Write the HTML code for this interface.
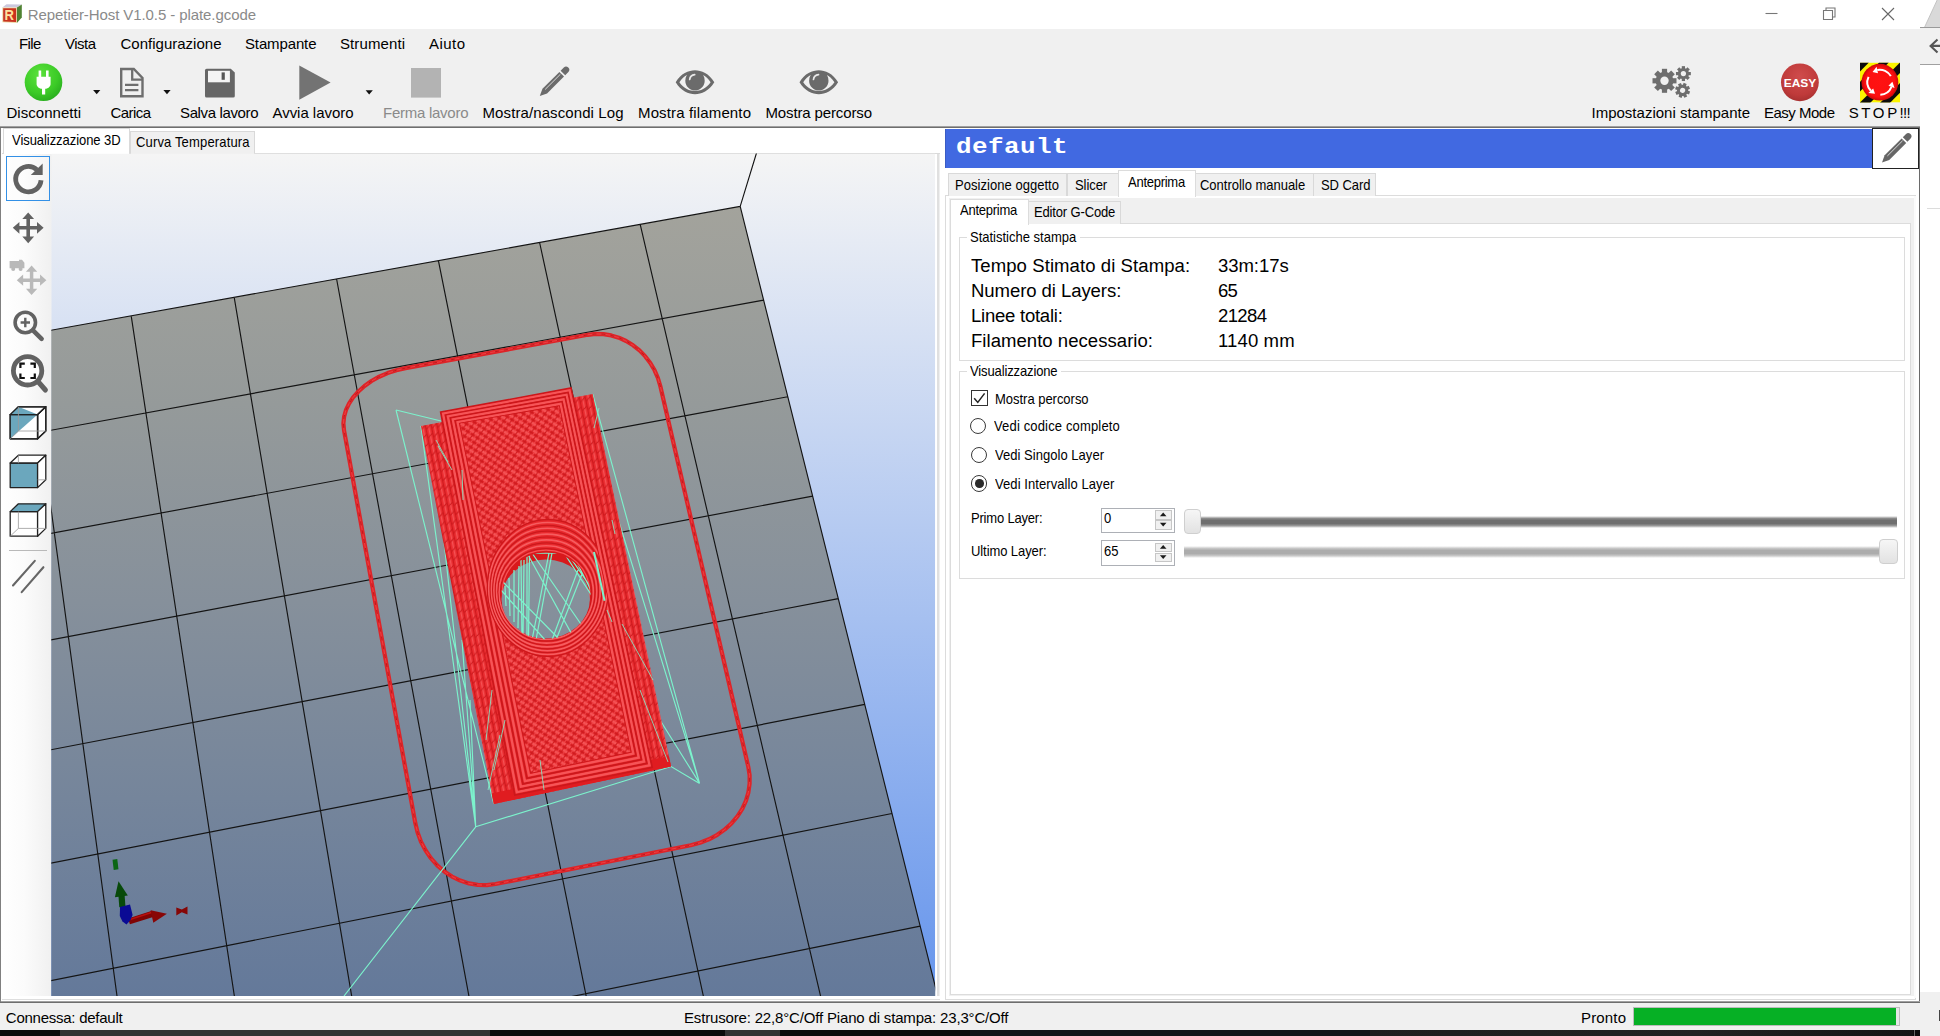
<!DOCTYPE html>
<html>
<head>
<meta charset="utf-8">
<title>Repetier-Host V1.0.5 - plate.gcode</title>
<style>
html,body{margin:0;padding:0;background:#fff;overflow:hidden}
body{width:1940px;height:1036px;position:relative;font-family:"Liberation Sans",sans-serif}
#root{position:absolute;left:0;top:0;width:1940px;height:1036px;overflow:hidden;background:#fff}
#root div{position:absolute;box-sizing:border-box}
.t{position:absolute;white-space:pre;display:block}
svg{position:absolute;overflow:visible}
</style>
</head>
<body>
<div id="root">

<!-- neighbouring window at far right -->
<div style="left:1920px;top:0;width:20px;height:1036px;background:#fff"></div>
<div style="left:1920px;top:27px;width:20px;height:37px;background:#f1f1f1"></div>
<div style="left:1920px;top:63.8px;width:20px;height:1px;background:#a0a0a0"></div>
<div style="left:1927px;top:208px;width:13px;height:1px;background:#dcdcdc"></div>
<div style="left:1920px;top:992.4px;width:20px;height:44px;background:#f0f0f0"></div>
<svg width="20" height="30" style="left:1920px;top:0"><polygon points="4.7,27 17.2,0 20,0 20,27" fill="#d9d9d9"/><path d="M4.7,27 L17.2,0" stroke="#c4c4c4" stroke-width="1" fill="none"/></svg>
<div style="left:1920px;top:27px;width:20px;height:1px;background:#9a9a9a"></div>
<svg width="20" height="20" style="left:1920px;top:36px"><path d="M20,9.9 H11 M17.5,3.5 L10.6,9.9 L17.5,16.6" stroke="#555" stroke-width="2.1" fill="none"/></svg>
<div style="left:1938.5px;top:1010px;width:1.5px;height:10.5px;background:#444"></div>
<!-- main window -->
<div style="left:0;top:0;width:1920px;height:29px;background:#fff"></div>
<div style="left:0;top:29px;width:1920px;height:97px;background:#f0f0f0"></div>
<div style="left:0;top:126px;width:1920px;height:1px;background:#a0a0a0"></div>
<div style="left:0;top:127px;width:1920px;height:1px;background:#6e6e6e"></div>
<div style="left:0;top:128px;width:1920px;height:874px;background:#fff"></div>
<div style="left:1919px;top:128px;width:1px;height:874px;background:#6a6a6a"></div>
<!-- status bar -->
<div style="left:0;top:1001px;width:1920px;height:1px;background:#a0a0a0"></div>
<div style="left:0;top:1002px;width:1920px;height:1px;background:#6e6e6e"></div>
<div style="left:0;top:1003px;width:1920px;height:27px;background:#f0f0f0"></div>
<div style="left:0;top:1029.5px;width:1920px;height:6.5px;background:#0c0c0c"></div>
<div style="left:60px;top:1029.5px;width:430px;height:6.5px;background:#333"></div>
<div style="left:725px;top:1029.5px;width:55px;height:6.5px;background:#333"></div>
<div style="left:970px;top:1029.5px;width:400px;height:6.5px;background:#10161a"></div>
<div style="left:1370px;top:1029.5px;width:543px;height:6.5px;background:linear-gradient(90deg,#1e1e1e,#222 60%,#141414)"></div>
<div style="left:1913.5px;top:1029.5px;width:1.2px;height:6.5px;background:#666"></div>
<div style="left:1633px;top:1006.5px;width:267px;height:19.5px;background:#e6e6e6;border:1px solid #bcbcbc"></div>
<div style="left:1634px;top:1007.5px;width:262.2px;height:17.5px;background:#06b025"></div>
<!-- left tab control -->
<div style="left:0;top:128px;width:1.4px;height:874px;background:#808080"></div>
<div style="left:2px;top:153px;width:938px;height:848px;background:#fff;border-top:1px solid #dadada"></div>
<div style="left:130px;top:130.5px;width:125px;height:23px;background:#f0f0f0;border:1px solid #d9d9d9;border-bottom:none"></div>
<div style="left:3px;top:128px;width:127px;height:26px;background:#fff;border:1px solid #dadada;border-bottom:none"></div>
<div style="left:2px;top:154px;width:49.5px;height:847px;background:linear-gradient(90deg,#ffffff 0%,#fbfbfb 45%,#f0f0f0 100%)"></div>
<div style="left:936.5px;top:154px;width:2px;height:845px;background:#e0e0e0"></div><div style="left:938.5px;top:154px;width:1px;height:845px;background:#efefef"></div>
<div style="left:2px;top:996px;width:938px;height:5px;background:#fff"></div><div style="left:2px;top:999px;width:937.5px;height:1px;background:#dedede"></div>
<!-- selected tool button -->
<div style="left:6px;top:156.3px;width:44px;height:45.2px;background:rgba(255,255,255,0.25);border:1px solid #3390e6"></div>
<div style="left:9px;top:549.5px;width:38px;height:1px;background:#b9b9b9"></div>
<!-- right panel header -->
<div style="left:945px;top:128.8px;width:929px;height:38.8px;background:#4169e1;border-left:1px solid #3a5cc4"></div>
<div style="left:1872.4px;top:127.6px;width:46.8px;height:41.2px;background:#fff;border:1.8px solid #222"></div>
<!-- outer tab control -->
<div style="left:944.8px;top:195.3px;width:971.7px;height:804.5px;background:#fff;border:1px solid #dcdcdc"></div>
<div style="left:949px;top:198px;width:965px;height:798px;background:#f0f0f0"></div><div style="left:1914px;top:196.3px;width:2px;height:802px;background:#fbfbfb"></div>

<div style="left:948px;top:172.8px;width:119px;height:23.2px;background:#f0f0f0;border:1px solid #d9d9d9;border-bottom:none"></div>
<div style="left:1066.5px;top:172.8px;width:52px;height:23.2px;background:#f0f0f0;border:1px solid #d9d9d9;border-bottom:none"></div>
<div style="left:1195px;top:172.8px;width:119px;height:23.2px;background:#f0f0f0;border:1px solid #d9d9d9;border-bottom:none"></div>
<div style="left:1313px;top:172.8px;width:63px;height:23.2px;background:#f0f0f0;border:1px solid #d9d9d9;border-bottom:none"></div>
<div style="left:1118px;top:170.2px;width:78px;height:26.8px;background:#fff;border:1px solid #dcdcdc;border-bottom:none"></div>
<!-- inner tab control -->
<div style="left:950px;top:223px;width:961px;height:771.6px;background:#fff;border:1px solid #dcdcdc"></div>
<div style="left:1028px;top:201px;width:93px;height:22.5px;background:#f0f0f0;border:1px solid #d9d9d9;border-bottom:none"></div>
<div style="left:950px;top:198.5px;width:78.5px;height:26px;background:#fff;border:1px solid #dcdcdc;border-bottom:none"></div>
<!-- group boxes -->
<div style="left:959px;top:237px;width:946px;height:123.5px;border:1px solid #dcdcdc"></div>
<div style="left:967px;top:230px;width:113px;height:14px;background:#fff"></div>
<div style="left:959px;top:371px;width:946px;height:207.5px;border:1px solid #dcdcdc"></div>
<div style="left:967px;top:364px;width:94px;height:14px;background:#fff"></div>
<!-- checkbox + radios -->
<div style="left:971px;top:390px;width:16.5px;height:16.4px;background:#fff;border:1.4px solid #333"></div>
<div style="left:969.8px;top:418px;width:16.2px;height:16.2px;border-radius:50%;background:#fff;border:1.5px solid #3a3a3a"></div>
<div style="left:971.2px;top:446.7px;width:16.2px;height:16.2px;border-radius:50%;background:#fff;border:1.5px solid #3a3a3a"></div>
<div style="left:971.2px;top:475.4px;width:16.2px;height:16.2px;border-radius:50%;background:#fff;border:1.5px solid #3a3a3a"></div>
<div style="left:975px;top:479.2px;width:8.6px;height:8.6px;border-radius:50%;background:#2a2a2a"></div>
<!-- spinners -->
<div style="left:1101px;top:507.5px;width:74px;height:25.5px;background:#fff;border:1px solid #adb0b6"></div>
<div style="left:1155px;top:510px;width:17px;height:9.6px;background:#f0f0f0;border:1px solid #c6c6c6"></div><div style="left:1155px;top:520px;width:17px;height:9.8px;background:#f0f0f0;border:1px solid #c6c6c6"></div>

<div style="left:1101px;top:540px;width:74px;height:25.5px;background:#fff;border:1px solid #adb0b6"></div>
<div style="left:1155px;top:542.5px;width:17px;height:9.6px;background:#f0f0f0;border:1px solid #c6c6c6"></div><div style="left:1155px;top:552.5px;width:17px;height:9.8px;background:#f0f0f0;border:1px solid #c6c6c6"></div>

<!-- sliders -->
<div style="left:1184px;top:516px;width:713px;height:11.5px;background:linear-gradient(180deg,#ffffff 0%,#8c8c8c 20%,#6f6f6f 36%,#6f6f6f 64%,#9c9c9c 82%,#ffffff 100%)"></div>
<div style="left:1183.5px;top:509px;width:17.5px;height:24.5px;border-radius:4px;background:linear-gradient(180deg,#f6f6f6,#e2e2e2);border:1px solid #cfcfcf"></div>
<div style="left:1184px;top:545.5px;width:713px;height:12px;background:linear-gradient(180deg,#ffffff 0%,#c6c6c6 20%,#acacac 36%,#acacac 64%,#cacaca 82%,#ffffff 100%)"></div>
<div style="left:1879px;top:539px;width:18.5px;height:25px;border-radius:4px;background:linear-gradient(180deg,#f6f6f6,#e2e2e2);border:1px solid #cfcfcf"></div>

<svg style="position:absolute;left:0;top:0" width="1940" height="1036" viewBox="0 0 1940 1036">
<defs>
<linearGradient id="bg" x1="0" y1="153" x2="0" y2="996" gradientUnits="userSpaceOnUse">
<stop offset="0" stop-color="#f5f5f5"/><stop offset="1" stop-color="#6695ec"/></linearGradient>
<linearGradient id="bed" x1="0" y1="206" x2="0" y2="996" gradientUnits="userSpaceOnUse">
<stop offset="0" stop-color="#a3a39c"/><stop offset="0.25" stop-color="#959a9a"/><stop offset="0.5" stop-color="#86909b"/><stop offset="0.75" stop-color="#75859b"/><stop offset="1" stop-color="#64799a"/></linearGradient>
<clipPath id="vw"><rect x="51.3" y="153.6" width="883.9000000000001" height="842.5"/></clipPath>
<pattern id="hatch" width="8" height="8" patternUnits="userSpaceOnUse" patternTransform="matrix(-1.02,0.18,0.18,0.97,460,423)">
<rect width="8" height="8" fill="#e8292d"/>
<path d="M-1,1 L1,-1 M-1,9 L9,-1 M7,9 L9,7" stroke="#f65659" stroke-width="2.3"/>
<path d="M-1,5 L5,-1 M3,9 L9,3" stroke="#d11a1e" stroke-width="1.5"/>
<path d="M-1,-1 L9,9 M-1,7 L1,9 M7,-1 L9,1" stroke="#cf1a1e" stroke-width="1.0"/>
<path d="M3,-1 L9,5 M-1,3 L5,9" stroke="#f24a4d" stroke-width="0.9"/>
</pattern>
<pattern id="rope" width="5.6" height="9" patternUnits="userSpaceOnUse" patternTransform="matrix(-1.02,0.18,0.2,0.97,420,426)">
<rect width="5.6" height="9" fill="#e8292d"/>
<path d="M0.5,-1 L0.5,10" stroke="#cf1a1e" stroke-width="1.1"/>
<path d="M3.2,-1 L3.2,10" stroke="#f55255" stroke-width="1.5"/>
<path d="M0.5,0 L5.6,4.5 M0.5,9 L5.6,13.5 M-5.1,4.5 L0.5,9" stroke="#cc181c" stroke-width="1.0" fill="none"/>
</pattern>
</defs>
<g clip-path="url(#vw)">
<rect x="51.3" y="153.6" width="883.9000000000001" height="842.5" fill="url(#bg)"/>
<polygon points="740.2,206.4 -181.7,372.1 -78.0,1384.3 979.3,1162.6" fill="url(#bed)"/>
<path d="M740.2,206.4 L979.3,1162.6 M640.2,224.4 L865.1,1186.6 M539.6,242.5 L750.0,1210.7 M438.4,260.7 L634.2,1235.0 M336.6,279.0 L517.5,1259.4 M234.2,297.4 L400.1,1284.0 M131.2,315.9 L281.8,1308.8 M27.5,334.5 L162.7,1333.8 M-76.7,353.3 L42.8,1358.9 M-181.7,372.1 L-78.0,1384.3 M740.2,206.4 L-181.7,372.1 M763.6,300.1 L-171.5,470.9 M787.7,396.7 L-161.1,572.8 M812.6,496.1 L-150.3,677.9 M838.3,598.6 L-139.2,786.3 M864.7,704.4 L-127.8,898.1 M892.0,813.5 L-115.9,1013.7 M920.2,926.1 L-103.7,1133.1 M949.3,1042.4 L-91.1,1256.6 M979.3,1162.6 L-78.0,1384.3 M740.2,206.4 L756.5,153" stroke="#141414" stroke-width="1.15" fill="none"/>
<polygon points="405.5,368.1 396.4,370.2 387.6,373.1 379.2,376.7 371.5,381.0 364.5,386.0 358.4,391.5 353.1,397.4 349.0,403.7 345.9,410.2 344.1,416.8 343.4,423.5 344.0,430.1 415.3,823.1 417.6,832.5 421.0,841.7 425.5,850.3 430.9,858.2 437.2,865.3 444.3,871.5 452.0,876.6 460.3,880.6 469.0,883.4 477.8,884.9 486.7,885.1 495.6,884.0 690.7,845.3 700.0,842.8 708.9,839.3 717.3,834.8 724.9,829.4 731.7,823.2 737.6,816.2 742.4,808.7 746.0,800.6 748.4,792.3 749.6,783.8 749.6,775.3 748.3,766.9 660.3,386.0 657.9,378.0 654.6,370.3 650.3,363.0 645.3,356.4 639.5,350.4 633.1,345.3 626.1,341.0 618.8,337.7 611.2,335.4 603.4,334.1 595.5,333.9 587.8,334.8" fill="none" stroke="#de2428" stroke-width="4.2" stroke-linejoin="round"/>
<polygon points="405.5,368.1 396.4,370.2 387.6,373.1 379.2,376.7 371.5,381.0 364.5,386.0 358.4,391.5 353.1,397.4 349.0,403.7 345.9,410.2 344.1,416.8 343.4,423.5 344.0,430.1 415.3,823.1 417.6,832.5 421.0,841.7 425.5,850.3 430.9,858.2 437.2,865.3 444.3,871.5 452.0,876.6 460.3,880.6 469.0,883.4 477.8,884.9 486.7,885.1 495.6,884.0 690.7,845.3 700.0,842.8 708.9,839.3 717.3,834.8 724.9,829.4 731.7,823.2 737.6,816.2 742.4,808.7 746.0,800.6 748.4,792.3 749.6,783.8 749.6,775.3 748.3,766.9 660.3,386.0 657.9,378.0 654.6,370.3 650.3,363.0 645.3,356.4 639.5,350.4 633.1,345.3 626.1,341.0 618.8,337.7 611.2,335.4 603.4,334.1 595.5,333.9 587.8,334.8" fill="none" stroke="#ee4246" stroke-width="0.9" stroke-linejoin="round"/>
<polygon points="405.5,368.1 396.4,370.2 387.6,373.1 379.2,376.7 371.5,381.0 364.5,386.0 358.4,391.5 353.1,397.4 349.0,403.7 345.9,410.2 344.1,416.8 343.4,423.5 344.0,430.1 415.3,823.1 417.6,832.5 421.0,841.7 425.5,850.3 430.9,858.2 437.2,865.3 444.3,871.5 452.0,876.6 460.3,880.6 469.0,883.4 477.8,884.9 486.7,885.1 495.6,884.0 690.7,845.3 700.0,842.8 708.9,839.3 717.3,834.8 724.9,829.4 731.7,823.2 737.6,816.2 742.4,808.7 746.0,800.6 748.4,792.3 749.6,783.8 749.6,775.3 748.3,766.9 660.3,386.0 657.9,378.0 654.6,370.3 650.3,363.0 645.3,356.4 639.5,350.4 633.1,345.3 626.1,341.0 618.8,337.7 611.2,335.4 603.4,334.1 595.5,333.9 587.8,334.8" fill="none" stroke="#c0181c" stroke-width="1.0" stroke-dasharray="4 5" stroke-linejoin="round"/>
<path d="M396.0,410.0 L441,421 M396.0,410.0 L493.8,803.9 M475.7,826.8 L420.9,426 M475.7,826.8 L436,470 M475.7,826.8 L344,996 M475.7,826.8 L671.1,766.5 L699.6,783.4 M699.6,783.4 L592.7,394.1 M699.6,783.4 L611,496 M699.6,783.4 L660,720 M475.7,826.8 L470,700 M475.7,826.8 L462,640" stroke="#7cf2cc" stroke-width="1.15" fill="none"/>
<polygon points="420.9,426.0 592.7,394.1 671.1,766.5 493.8,803.9" fill="url(#rope)"/>
<polygon points="493.8,803.9 671.1,766.5 668.9,756.0 491.6,793.4" fill="#e01c20"/>
<polygon points="440.7,412.2 571.0,388.1 652.2,767.3 514.8,795.0" fill="#e8292d"/>
<polygon points="440.7,412.2 571.0,388.1 652.2,767.3 514.8,795.0" fill="none" stroke="#cc171b" stroke-width="1.7"/>
<polygon points="443.1,413.6 569.5,390.4 649.5,765.4 516.8,792.2" fill="none" stroke="#f65457" stroke-width="2.3"/>
<polygon points="445.5,415.1 568.0,392.6 646.8,763.4 518.8,789.4" fill="none" stroke="#cc171b" stroke-width="1.7"/>
<polygon points="447.9,416.5 566.5,394.9 644.1,761.5 520.9,786.6" fill="none" stroke="#f65457" stroke-width="2.3"/>
<polygon points="450.4,417.9 565.0,397.1 641.4,759.5 522.9,783.9" fill="none" stroke="#cc171b" stroke-width="1.7"/>
<polygon points="452.8,419.3 563.5,399.4 638.7,757.6 524.9,781.1" fill="none" stroke="#f65457" stroke-width="2.3"/>
<polygon points="455.2,420.8 562.0,401.7 636.0,755.7 527.0,778.3" fill="none" stroke="#cc171b" stroke-width="1.7"/>
<polygon points="457.6,422.2 560.5,403.9 633.3,753.7 529.0,775.5" fill="none" stroke="#f65457" stroke-width="2.3"/>
<polygon points="460.0,423.6 559.0,406.2 630.6,751.8 531.0,772.7" fill="none" stroke="#cc171b" stroke-width="1.7"/>
<polygon points="460.0,423.6 559.0,406.2 630.6,751.8 531.0,772.7" fill="url(#hatch)"/>
<clipPath id="hc"><polygon points="450.4,417.9 565.0,397.1 641.4,759.5 522.9,783.9"/></clipPath>
<g clip-path="url(#hc)">
<ellipse cx="548" cy="588" rx="61" ry="69" fill="#e8292d"/>
<ellipse cx="546.0" cy="593.0" rx="45.7" ry="44.4" fill="none" stroke="#cc171b" stroke-width="1.2"/>
<ellipse cx="546.2" cy="592.5" rx="47.2" ry="46.8" fill="none" stroke="#f65c5f" stroke-width="1.6"/>
<ellipse cx="546.4" cy="592.0" rx="48.7" ry="49.2" fill="none" stroke="#cc171b" stroke-width="1.2"/>
<ellipse cx="546.6" cy="591.5" rx="50.2" ry="51.6" fill="none" stroke="#f65c5f" stroke-width="1.6"/>
<ellipse cx="546.8" cy="591.0" rx="51.7" ry="54.0" fill="none" stroke="#cc171b" stroke-width="1.2"/>
<ellipse cx="547.0" cy="590.5" rx="53.2" ry="56.4" fill="none" stroke="#f65c5f" stroke-width="1.6"/>
<ellipse cx="547.2" cy="590.0" rx="54.7" ry="58.8" fill="none" stroke="#cc171b" stroke-width="1.2"/>
<ellipse cx="547.4" cy="589.5" rx="56.2" ry="61.2" fill="none" stroke="#f65c5f" stroke-width="1.6"/>
<ellipse cx="547.6" cy="589.0" rx="57.7" ry="63.6" fill="none" stroke="#cc171b" stroke-width="1.2"/>
<ellipse cx="547.8" cy="588.5" rx="59.2" ry="66.0" fill="none" stroke="#f65c5f" stroke-width="1.6"/>
<ellipse cx="548.0" cy="588.0" rx="60.7" ry="68.4" fill="none" stroke="#cc171b" stroke-width="1.2"/>
</g>
<ellipse cx="546.0" cy="594.0" rx="45.2" ry="44.9" fill="#d8191c"/>
<ellipse cx="546.0" cy="592.0" rx="43.7" ry="41.9" fill="none" stroke="#f65457" stroke-width="1.2"/>
<ellipse cx="545.7" cy="599.0" rx="44.2" ry="39.4" fill="url(#bed)"/>
<clipPath id="hh"><ellipse cx="546.0" cy="596.0" rx="44.7" ry="43.4"/></clipPath>
<path d="M527,553 L527,640 M529.5,553 L528.5,640 M524,560 L523,636 M519,566 L518,628 M514,570 L514,622 M509,578 L510,616 M505,586 L506,606 M527,553 L572,553 L596,600 M527,553 L575,640 M532,553 L585,630 M549,553 L532,640 M552,553 L536,640 M578,570 L552,640 M582,574 L556,640 M501,590 L545,640 M503,582 L560,640 M531,548 L570,548 M566,556 L592,596 M568,554 L594,592 M521,560 L522,640" stroke="#7cf2cc" stroke-width="1.25" fill="none" clip-path="url(#hh)"/>
<path d="M594,552 L604.6,600.8" stroke="#7cf2cc" stroke-width="2" fill="none"/>
<path d="M599,408 L594,428 M438,446 L452,470 M436,440 L448,462 M622,624 L653,680 M612,520 L615,534 M607,610 L612,622 M640,690 L668,762 M500,735 L488,790 M505,720 L494,770 M492,690 L486,740 M462,470 L463,500 M540,760 L544,790" stroke="#86e8c6" stroke-width="1" fill="none" opacity="0.85"/>
<path d="M129,921.4 L153,913.8" stroke="#800404" stroke-width="6.2"/>
<path d="M130,919.4 L153,912" stroke="#b81010" stroke-width="1.6"/>
<polygon points="150.6,910.3 166.9,913.8 153.3,922.8" fill="#880606"/>
<path d="M122.4,907 L121.4,894" stroke="#084a0a" stroke-width="6.2"/>
<polygon points="114.9,897.2 118.5,881.3 127.8,895.6" fill="#084a0a"/>
<polygon points="120,907 130,904.4 132.6,915 130.5,920 126.5,924.6 122.5,921.5 119.8,916" fill="#0a0a94"/>
<polygon points="176.3,907.4 181.8,909.6 187.5,906.4 187.5,914.4 181.8,912.2 176.3,915.6" fill="#860606"/>
<path d="M114.9,859.4 L116.1,869.6" stroke="#0b6614" stroke-width="4.8"/>
</g></svg>
<svg width="1940" height="1036" viewBox="0 0 1940 1036" style="left:0;top:0">
<defs>
<radialGradient id="gplug" cx="0.4" cy="0.3" r="0.8"><stop offset="0" stop-color="#5be13c"/><stop offset="0.6" stop-color="#3ccb27"/><stop offset="1" stop-color="#23a51c"/></radialGradient>
<radialGradient id="geasy" cx="0.5" cy="0.35" r="0.75"><stop offset="0" stop-color="#cf4c4c"/><stop offset="0.65" stop-color="#bf3a3a"/><stop offset="1" stop-color="#9c2c2c"/></radialGradient>
<radialGradient id="gstop" cx="0.5" cy="0.5" r="0.5"><stop offset="0" stop-color="#ff1212"/><stop offset="0.8" stop-color="#fc1010"/><stop offset="0.9" stop-color="#e60c0c"/><stop offset="1" stop-color="#c80a0a"/></radialGradient>
<clipPath id="hazc"><rect x="1860" y="62.6" width="40" height="40"/></clipPath>
<g id="eye"><path d="M0,12.3 C5,3.5 13,0.3 19.3,0.3 C25.6,0.3 33.5,3.5 38.6,12.3 C33.5,21 25.6,24.2 19.3,24.2 C13,24.2 5,21 0,12.3 Z M3.7,12.3 C8,18.7 14,21 19.3,21 C24.6,21 30.6,18.7 34.9,12.3 C32.5,8.7 30,6.5 27.5,5 C28.5,6.8 29,8.7 29,10.7 C29,16.1 24.7,20.4 19.3,20.4 C13.9,20.4 9.6,16.1 9.6,10.7 C9.6,8.7 10.1,6.8 11.1,5 C8.6,6.5 6.1,8.7 3.7,12.3 Z" fill="#6b6b6b" fill-rule="evenodd"/><circle cx="19.3" cy="10.7" r="8.6" fill="#6b6b6b"/><path d="M14,9.5 A5.5,5.5 0 0 1 19,4.6" stroke="#e9e9e9" stroke-width="1.7" fill="none" stroke-linecap="round"/></g>
<g id="pencil"><path d="M0.80,29.10 L8.05,26.45 L25.02,9.48 L20.42,4.88 L3.45,21.85 Z"/><path d="M26.22,8.28 L29.40,5.09 A3.25,3.25 0 0 0 24.81,0.50 L21.62,3.68 Z"/><path d="M6.17,22.45 L21.38,7.25" stroke="#e4e4e4" stroke-width="0.9" fill="none"/></g>
<g id="dd"><polygon points="-3.6,-2 3.6,-2 0,2.2" fill="#111"/></g>
<g id="move"><path d="M0,-15.4 L5.9,-8.8 L1.8,-8.8 L1.8,-1.8 L8.8,-1.8 L8.8,-5.9 L15.4,0 L8.8,5.9 L8.8,1.8 L1.8,1.8 L1.8,8.8 L5.9,8.8 L0,15.4 L-5.9,8.8 L-1.8,8.8 L-1.8,1.8 L-8.8,1.8 L-8.8,5.9 L-15.4,0 L-8.8,-5.9 L-8.8,-1.8 L-1.8,-1.8 L-1.8,-8.8 L-5.9,-8.8 Z"/></g>
</defs>
<!-- app icon -->
<g>
<polygon points="2.3,7.4 6.5,4.2 21.8,4.4 16.9,7.4" fill="#cbc8dd"/>
<polygon points="16.9,7.4 21.8,4.4 21.8,17.5 16.9,22.9" fill="#4f8232"/>
<polygon points="2.3,7.4 16.9,7.4 16.9,22.9 2.3,22.3" fill="#ecd6a4"/>
<polygon points="3.2,8.2 16.1,8.2 16.1,22.1 3.2,21.6" fill="#c9331f"/>
<text x="4.5" y="19.9" font-family="'Liberation Sans',sans-serif" font-weight="bold" font-size="14.4" fill="#fde3a0" textLength="9.4" lengthAdjust="spacingAndGlyphs">R</text>
</g>
<!-- window controls -->
<path d="M1765.5,13.5 H1777.5" stroke="#777" stroke-width="1.1"/>
<path d="M1823.5,10.5 h9 v9 h-9 z M1826,10.5 v-2.5 h9 v9 h-2.5" stroke="#777" stroke-width="1.1" fill="none"/>
<path d="M1882,8 L1894,20 M1894,8 L1882,20" stroke="#666" stroke-width="1.1"/>
<!-- connect -->
<circle cx="43.5" cy="82.3" r="18.8" fill="url(#gplug)"/>
<path d="M38.6,70.5 h2.6 v6.2 h4.8 v-6.2 h2.6 v6.2 h2 v7.2 c0,2.6 -2.4,4.6 -5.4,4.9 v5.7 h-3.2 v-5.7 c-3,-0.3 -5.4,-2.3 -5.4,-4.9 v-7.2 h2 z" fill="#fff"/>
<use href="#dd" x="96.7" y="92.1"/>
<!-- document -->
<path d="M121.2,69 h12.6 l8.7,8.9 v18.3 h-21.3 z" fill="none" stroke="#6e6e6e" stroke-width="2.4" stroke-linejoin="miter"/>
<path d="M132.2,69.4 v10.2 h10" fill="none" stroke="#6e6e6e" stroke-width="2.3"/>
<path d="M125,84.8 h13.4 M125,90.2 h13.4" stroke="#6e6e6e" stroke-width="2.2"/>
<use href="#dd" x="167" y="92.1"/>
<!-- floppy -->
<path d="M206.6,68.8 h24.2 l4,3.6 v23.6 q0,1.6 -1.6,1.6 h-26.6 q-1.6,0 -1.6,-1.6 v-25.6 q0,-1.6 1.6,-1.6 z" fill="#666"/>
<rect x="208" y="70.8" width="21.9" height="11.5" fill="#f4f4f4"/>
<rect x="221.6" y="72.4" width="3.2" height="7.4" fill="#555"/>
<!-- play -->
<polygon points="299.3,65.4 330.6,82.6 299.3,99.8" fill="#737373"/>
<use href="#dd" x="369.2" y="92.2"/>
<!-- stop -->
<rect x="411" y="68" width="30" height="29.6" fill="#b3b3b3"/>
<!-- pencil -->
<use href="#pencil" x="539" y="67" fill="#6b6b6b"/>
<!-- eyes -->
<use href="#eye" x="675.7" y="70"/>
<use href="#eye" x="799.5" y="70"/>
<!-- gears -->
<g fill="#6e6e6e">
<g transform="translate(1664.5,80.8)"><circle r="9" /><g id="t8"><rect x="-2.6" y="-12" width="5.2" height="24"/><rect x="-2.6" y="-12" width="5.2" height="24" transform="rotate(45)"/><rect x="-2.6" y="-12" width="5.2" height="24" transform="rotate(90)"/><rect x="-2.6" y="-12" width="5.2" height="24" transform="rotate(135)"/></g><circle r="4.2" fill="#f0f0f0"/></g>
<g transform="translate(1683.4,73.6) scale(0.62)"><circle r="9"/><use href="#t8"/><circle r="4.2" fill="#f0f0f0"/></g>
<g transform="translate(1682.6,90.4) scale(0.62) rotate(20)"><circle r="9"/><use href="#t8"/><circle r="4.2" fill="#f0f0f0"/></g>
</g>
<!-- easy -->
<circle cx="1799.9" cy="82.3" r="18.9" fill="url(#geasy)"/>
<text x="1800" y="87" text-anchor="middle" font-family="'Liberation Sans',sans-serif" font-weight="bold" font-size="11" fill="#fff" textLength="32.6" lengthAdjust="spacingAndGlyphs">EASY</text>
<!-- stop -->
<g clip-path="url(#hazc)"><rect x="1860" y="62.6" width="40" height="40" fill="#fbf400"/><g fill="#0c0c0c"><polygon points="1859,62.6 1868.9,62.6 1808.9,122.6 1799,122.6"/><polygon points="1879.2,62.6 1888.8,62.6 1828.8,122.6 1819.2,122.6"/><polygon points="1900,62.6 1910.5,62.6 1850.5,122.6 1840,122.6"/><polygon points="1920.3,62.6 1930.2,62.6 1870.2,122.6 1860.3,122.6"/><polygon points="1940.5,62.6 1950,62.6 1890,122.6 1880.5,122.6"/></g></g>
<circle cx="1879.9" cy="82.2" r="18.4" fill="url(#gstop)"/>
<path d="M1890.83,76.14 A12.5,12.5 0 0 0 1877.30,69.97" stroke="#fff" stroke-width="2" fill="none"/>
<polygon points="1872.55,72.09 1876.61,66.75 1877.99,73.20" fill="#fff"/>
<path d="M1868.57,76.92 A12.5,12.5 0 0 0 1870.79,90.76" stroke="#fff" stroke-width="2" fill="none"/>
<polygon points="1875.06,93.72 1868.38,93.02 1873.19,88.50" fill="#fff"/>
<path d="M1880.34,94.69 A12.5,12.5 0 0 0 1891.49,86.88" stroke="#fff" stroke-width="2" fill="none"/>
<polygon points="1892.39,81.76 1894.55,88.12 1888.43,85.65" fill="#fff"/>
<!-- header pencil -->
<use href="#pencil" x="1881.2" y="133.5" fill="#666"/>
<!-- tool icons -->
<path d="M36.9,169.66 A12.7,12.7 0 1 0 41.05,180.2" stroke="#626262" stroke-width="4.8" fill="none"/>
<polygon points="42.7,163.6 42.7,174.9 30.8,174.9" fill="#626262"/>
<use href="#move" x="28.2" y="227.8" fill="#626262"/>
<use href="#move" x="31.6" y="280.2" fill="#b9b9b9" transform="translate(31.6,280.2) scale(0.96) translate(-31.6,-280.2)"/>
<path d="M9.6,261 h9.4 v-1.2 h3 l2.4,3 v5.4 h-14.8 z" fill="#b9b9b9"/><circle cx="13.2" cy="269" r="2" fill="#b9b9b9"/><circle cx="20.6" cy="269" r="2" fill="#b9b9b9"/>
<circle cx="25.3" cy="322.5" r="10.2" stroke="#626262" stroke-width="3.6" fill="none"/>
<path d="M33,330.4 L41.6,338.8" stroke="#626262" stroke-width="4.6" stroke-linecap="round"/>
<path d="M20.6,322.5 h9.4 M25.3,317.8 v9.4" stroke="#626262" stroke-width="2.4"/>
<circle cx="27.6" cy="370.8" r="14.2" stroke="#626262" stroke-width="4.8" fill="#fff"/>
<path d="M38.4,382 L45.4,390" stroke="#626262" stroke-width="5" stroke-linecap="round"/>
<path d="M20.4,368 v-4.4 h4.4 M30.4,363.6 h4.4 v4.4 M34.8,373.6 v4.4 h-4.4 M24.8,378 h-4.4 v-4.4" stroke="#111" stroke-width="2.2" fill="none"/>
<!-- cubes -->
<g stroke="#222" stroke-width="1.3" fill="none" stroke-linejoin="round">
<g>
<polygon points="10.2,414.6 37.6,414.6 37.6,438.8 10.2,438.8" fill="#fff"/><polygon points="10.2,414.6 18.4,406.8 45.8,406.8 37.6,414.6" fill="#fff"/><polygon points="37.6,414.6 45.8,406.8 45.8,431 37.6,438.8" fill="#fff"/>
<polygon points="10.2,414.6 37.6,414.6 10.2,438.8" fill="#6ba7bd" stroke="none"/><polygon points="10.2,414.6 18.4,406.8 37.6,414.6" fill="#6ba7bd" stroke="none"/>
<polygon points="10.2,414.6 37.6,414.6 37.6,438.8 10.2,438.8"/><polygon points="10.2,414.6 18.4,406.8 45.8,406.8 37.6,414.6"/><polygon points="37.6,414.6 45.8,406.8 45.8,431 37.6,438.8"/>
<path d="M18.4,406.8 v24.2 h27.4 M18.4,431 L10.2,438.8" stroke="#999" stroke-width="0.8"/>
</g>
<g>
<polygon points="10.2,463 37.6,463 37.6,487.6 10.2,487.6" fill="#6ba7bd"/><polygon points="10.2,463 18.4,455.2 45.8,455.2 37.6,463" fill="#fff"/><polygon points="37.6,463 45.8,455.2 45.8,479.8 37.6,487.6" fill="#fff"/>
<path d="M18.4,455.2 v8 M37.6,479.8 h8.2" stroke="#999" stroke-width="0.8"/>
</g>
<g>
<polygon points="10.2,511.6 37.6,511.6 37.6,536.2 10.2,536.2" fill="#fff"/><polygon points="10.2,511.6 18.4,503.8 45.8,503.8 37.6,511.6" fill="#6ba7bd"/><polygon points="37.6,511.6 45.8,503.8 45.8,528.4 37.6,536.2" fill="#fff"/>
<path d="M18.4,511.6 v16.8 h27.4 M18.4,528.4 L10.2,536.2" stroke="#999" stroke-width="0.8"/>
</g>
</g>
<path d="M13,585.5 L34.8,560.9 M21.7,592.1 L43.4,567.2" stroke="#666" stroke-width="2.1" stroke-linecap="round"/>
<!-- checkbox tick -->
<path d="M974.2,398.2 L977.8,402.4 L984.6,393.4" stroke="#222" stroke-width="1.5" fill="none"/>
<!-- spinner arrows -->
<polygon points="1163.2,512.4 1166.5,516.3 1159.9,516.3" fill="#1a1a1a"/><polygon points="1163.2,526.6 1166.5,522.7 1159.9,522.7" fill="#1a1a1a"/>
<polygon points="1163.2,544.9 1166.5,548.8 1159.9,548.8" fill="#1a1a1a"/><polygon points="1163.2,559.1 1166.5,555.2 1159.9,555.2" fill="#1a1a1a"/>
</svg>

<span class="t" style="left:27.8px;top:7.1px;font-family:'Liberation Sans', sans-serif;font-size:15px;font-weight:normal;line-height:15px;color:#8a8a8a;letter-spacing:-0.084px">Repetier-Host V1.0.5 - plate.gcode</span>
<span class="t" style="left:19.0px;top:36.1px;font-family:'Liberation Sans', sans-serif;font-size:15px;font-weight:normal;line-height:15px;color:#000;letter-spacing:-0.591px">File</span>
<span class="t" style="left:65.0px;top:36.1px;font-family:'Liberation Sans', sans-serif;font-size:15px;font-weight:normal;line-height:15px;color:#000;letter-spacing:-0.520px">Vista</span>
<span class="t" style="left:120.5px;top:36.1px;font-family:'Liberation Sans', sans-serif;font-size:15px;font-weight:normal;line-height:15px;color:#000;letter-spacing:0.007px">Configurazione</span>
<span class="t" style="left:245.0px;top:36.1px;font-family:'Liberation Sans', sans-serif;font-size:15px;font-weight:normal;line-height:15px;color:#000;letter-spacing:-0.131px">Stampante</span>
<span class="t" style="left:340.0px;top:36.1px;font-family:'Liberation Sans', sans-serif;font-size:15px;font-weight:normal;line-height:15px;color:#000;letter-spacing:0.100px">Strumenti</span>
<span class="t" style="left:429.0px;top:36.1px;font-family:'Liberation Sans', sans-serif;font-size:15px;font-weight:normal;line-height:15px;color:#000;letter-spacing:0.449px">Aiuto</span>
<span class="t" style="left:6.5px;top:104.8px;font-family:'Liberation Sans', sans-serif;font-size:15px;font-weight:normal;line-height:15px;color:#000;letter-spacing:0.030px">Disconnetti</span>
<span class="t" style="left:110.5px;top:104.8px;font-family:'Liberation Sans', sans-serif;font-size:15px;font-weight:normal;line-height:15px;color:#000;letter-spacing:-0.572px">Carica</span>
<span class="t" style="left:180.0px;top:104.8px;font-family:'Liberation Sans', sans-serif;font-size:15px;font-weight:normal;line-height:15px;color:#000;letter-spacing:-0.368px">Salva lavoro</span>
<span class="t" style="left:272.5px;top:104.8px;font-family:'Liberation Sans', sans-serif;font-size:15px;font-weight:normal;line-height:15px;color:#000;letter-spacing:-0.040px">Avvia lavoro</span>
<span class="t" style="left:383.0px;top:104.8px;font-family:'Liberation Sans', sans-serif;font-size:15px;font-weight:normal;line-height:15px;color:#8a8a8a;letter-spacing:-0.260px">Ferma lavoro</span>
<span class="t" style="left:482.5px;top:104.8px;font-family:'Liberation Sans', sans-serif;font-size:15px;font-weight:normal;line-height:15px;color:#000;letter-spacing:0.097px">Mostra/nascondi Log</span>
<span class="t" style="left:638.0px;top:104.8px;font-family:'Liberation Sans', sans-serif;font-size:15px;font-weight:normal;line-height:15px;color:#000;letter-spacing:0.142px">Mostra filamento</span>
<span class="t" style="left:765.5px;top:104.8px;font-family:'Liberation Sans', sans-serif;font-size:15px;font-weight:normal;line-height:15px;color:#000;letter-spacing:-0.134px">Mostra percorso</span>
<span class="t" style="left:1591.5px;top:104.8px;font-family:'Liberation Sans', sans-serif;font-size:15px;font-weight:normal;line-height:15px;color:#000;letter-spacing:0.004px">Impostazioni stampante</span>
<span class="t" style="left:1764.0px;top:104.8px;font-family:'Liberation Sans', sans-serif;font-size:15px;font-weight:normal;line-height:15px;color:#000;letter-spacing:-0.506px">Easy Mode</span>
<span class="t" style="left:1848.7px;top:104.8px;font-family:'Liberation Sans', sans-serif;font-size:15px;font-weight:normal;line-height:15px;color:#000;letter-spacing:-0.720px">S T O P !!!</span>
<span class="t" style="left:11.6px;top:132.8px;font-family:'Liberation Sans', sans-serif;font-size:14.8px;font-weight:normal;line-height:14.8px;color:#000;letter-spacing:-0.079px;transform-origin:0 0;transform:scaleX(0.88)">Visualizzazione 3D</span>
<span class="t" style="left:135.5px;top:135.0px;font-family:'Liberation Sans', sans-serif;font-size:14.8px;font-weight:normal;line-height:14.8px;color:#000;letter-spacing:0.162px;transform-origin:0 0;transform:scaleX(0.88)">Curva Temperatura</span>
<span class="t" style="left:956.0px;top:137.4px;font-family:'Liberation Mono', monospace;font-size:21.6px;font-weight:bold;line-height:21.6px;color:#fff;letter-spacing:0.366px;transform-origin:0 0;transform:scaleX(1.2)">default</span>
<span class="t" style="left:955.0px;top:177.5px;font-family:'Liberation Sans', sans-serif;font-size:14.8px;font-weight:normal;line-height:14.8px;color:#000;letter-spacing:0.034px;transform-origin:0 0;transform:scaleX(0.88)">Posizione oggetto</span>
<span class="t" style="left:1075.3px;top:177.5px;font-family:'Liberation Sans', sans-serif;font-size:14.8px;font-weight:normal;line-height:14.8px;color:#000;letter-spacing:-0.082px;transform-origin:0 0;transform:scaleX(0.88)">Slicer</span>
<span class="t" style="left:1127.6px;top:175.1px;font-family:'Liberation Sans', sans-serif;font-size:14.8px;font-weight:normal;line-height:14.8px;color:#000;letter-spacing:-0.307px;transform-origin:0 0;transform:scaleX(0.88)">Anteprima</span>
<span class="t" style="left:1200.3px;top:177.5px;font-family:'Liberation Sans', sans-serif;font-size:14.8px;font-weight:normal;line-height:14.8px;color:#000;letter-spacing:-0.034px;transform-origin:0 0;transform:scaleX(0.88)">Controllo manuale</span>
<span class="t" style="left:1321.0px;top:177.5px;font-family:'Liberation Sans', sans-serif;font-size:14.8px;font-weight:normal;line-height:14.8px;color:#000;letter-spacing:-0.102px;transform-origin:0 0;transform:scaleX(0.88)">SD Card</span>
<span class="t" style="left:960.0px;top:202.7px;font-family:'Liberation Sans', sans-serif;font-size:14.8px;font-weight:normal;line-height:14.8px;color:#000;letter-spacing:-0.292px;transform-origin:0 0;transform:scaleX(0.88)">Anteprima</span>
<span class="t" style="left:1034.0px;top:204.8px;font-family:'Liberation Sans', sans-serif;font-size:14.8px;font-weight:normal;line-height:14.8px;color:#000;letter-spacing:-0.183px;transform-origin:0 0;transform:scaleX(0.88)">Editor G-Code</span>
<span class="t" style="left:970.4px;top:229.8px;font-family:'Liberation Sans', sans-serif;font-size:14.8px;font-weight:normal;line-height:14.8px;color:#000;letter-spacing:-0.013px;transform-origin:0 0;transform:scaleX(0.88)">Statistiche stampa</span>
<span class="t" style="left:971.4px;top:257.2px;font-family:'Liberation Sans', sans-serif;font-size:18px;font-weight:normal;line-height:18px;color:#000;letter-spacing:0.070px;transform-origin:0 0;transform:scaleX(1.03)">Tempo Stimato di Stampa:</span>
<span class="t" style="left:1217.8px;top:257.2px;font-family:'Liberation Sans', sans-serif;font-size:18px;font-weight:normal;line-height:18px;color:#000;letter-spacing:-0.068px;transform-origin:0 0;transform:scaleX(1.03)">33m:17s</span>
<span class="t" style="left:971.4px;top:282.0px;font-family:'Liberation Sans', sans-serif;font-size:18px;font-weight:normal;line-height:18px;color:#000;letter-spacing:-0.071px;transform-origin:0 0;transform:scaleX(1.03)">Numero di Layers:</span>
<span class="t" style="left:1217.8px;top:282.0px;font-family:'Liberation Sans', sans-serif;font-size:18px;font-weight:normal;line-height:18px;color:#000;letter-spacing:-0.711px;transform-origin:0 0;transform:scaleX(1.03)">65</span>
<span class="t" style="left:971.4px;top:307.0px;font-family:'Liberation Sans', sans-serif;font-size:18px;font-weight:normal;line-height:18px;color:#000;letter-spacing:-0.246px;transform-origin:0 0;transform:scaleX(1.03)">Linee totali:</span>
<span class="t" style="left:1217.8px;top:307.0px;font-family:'Liberation Sans', sans-serif;font-size:18px;font-weight:normal;line-height:18px;color:#000;letter-spacing:-0.622px;transform-origin:0 0;transform:scaleX(1.03)">21284</span>
<span class="t" style="left:971.4px;top:332.0px;font-family:'Liberation Sans', sans-serif;font-size:18px;font-weight:normal;line-height:18px;color:#000;letter-spacing:0.030px;transform-origin:0 0;transform:scaleX(1.03)">Filamento necessario:</span>
<span class="t" style="left:1217.8px;top:332.0px;font-family:'Liberation Sans', sans-serif;font-size:18px;font-weight:normal;line-height:18px;color:#000;letter-spacing:0.111px;transform-origin:0 0;transform:scaleX(1.03)">1140 mm</span>
<span class="t" style="left:970.4px;top:363.6px;font-family:'Liberation Sans', sans-serif;font-size:14.8px;font-weight:normal;line-height:14.8px;color:#000;letter-spacing:-0.156px;transform-origin:0 0;transform:scaleX(0.88)">Visualizzazione</span>
<span class="t" style="left:995.4px;top:391.8px;font-family:'Liberation Sans', sans-serif;font-size:14.8px;font-weight:normal;line-height:14.8px;color:#000;letter-spacing:-0.039px;transform-origin:0 0;transform:scaleX(0.88)">Mostra percorso</span>
<span class="t" style="left:994.1px;top:418.8px;font-family:'Liberation Sans', sans-serif;font-size:14.8px;font-weight:normal;line-height:14.8px;color:#000;letter-spacing:0.164px;transform-origin:0 0;transform:scaleX(0.88)">Vedi codice completo</span>
<span class="t" style="left:995.4px;top:447.7px;font-family:'Liberation Sans', sans-serif;font-size:14.8px;font-weight:normal;line-height:14.8px;color:#000;letter-spacing:0.027px;transform-origin:0 0;transform:scaleX(0.88)">Vedi Singolo Layer</span>
<span class="t" style="left:995.4px;top:476.5px;font-family:'Liberation Sans', sans-serif;font-size:14.8px;font-weight:normal;line-height:14.8px;color:#000;letter-spacing:0.075px;transform-origin:0 0;transform:scaleX(0.88)">Vedi Intervallo Layer</span>
<span class="t" style="left:971.4px;top:511.3px;font-family:'Liberation Sans', sans-serif;font-size:14.8px;font-weight:normal;line-height:14.8px;color:#000;letter-spacing:-0.230px;transform-origin:0 0;transform:scaleX(0.88)">Primo Layer:</span>
<span class="t" style="left:971.4px;top:543.5px;font-family:'Liberation Sans', sans-serif;font-size:14.8px;font-weight:normal;line-height:14.8px;color:#000;letter-spacing:-0.105px;transform-origin:0 0;transform:scaleX(0.88)">Ultimo Layer:</span>
<span class="t" style="left:1103.7px;top:511.3px;font-family:'Liberation Sans', sans-serif;font-size:14.8px;font-weight:normal;line-height:14.8px;color:#000;letter-spacing:0.000px;transform-origin:0 0;transform:scaleX(0.88)">0</span>
<span class="t" style="left:1103.7px;top:543.5px;font-family:'Liberation Sans', sans-serif;font-size:14.8px;font-weight:normal;line-height:14.8px;color:#000;letter-spacing:0.000px;transform-origin:0 0;transform:scaleX(0.88)">65</span>
<span class="t" style="left:5.8px;top:1009.7px;font-family:'Liberation Sans', sans-serif;font-size:15px;font-weight:normal;line-height:15px;color:#000;letter-spacing:-0.251px">Connessa: default</span>
<span class="t" style="left:684.0px;top:1009.7px;font-family:'Liberation Sans', sans-serif;font-size:15px;font-weight:normal;line-height:15px;color:#000;letter-spacing:-0.166px">Estrusore: 22,8°C/Off Piano di stampa: 23,3°C/Off</span>
<span class="t" style="left:1581.0px;top:1009.7px;font-family:'Liberation Sans', sans-serif;font-size:15px;font-weight:normal;line-height:15px;color:#000;letter-spacing:0.159px">Pronto</span>
</div>
</body>
</html>
